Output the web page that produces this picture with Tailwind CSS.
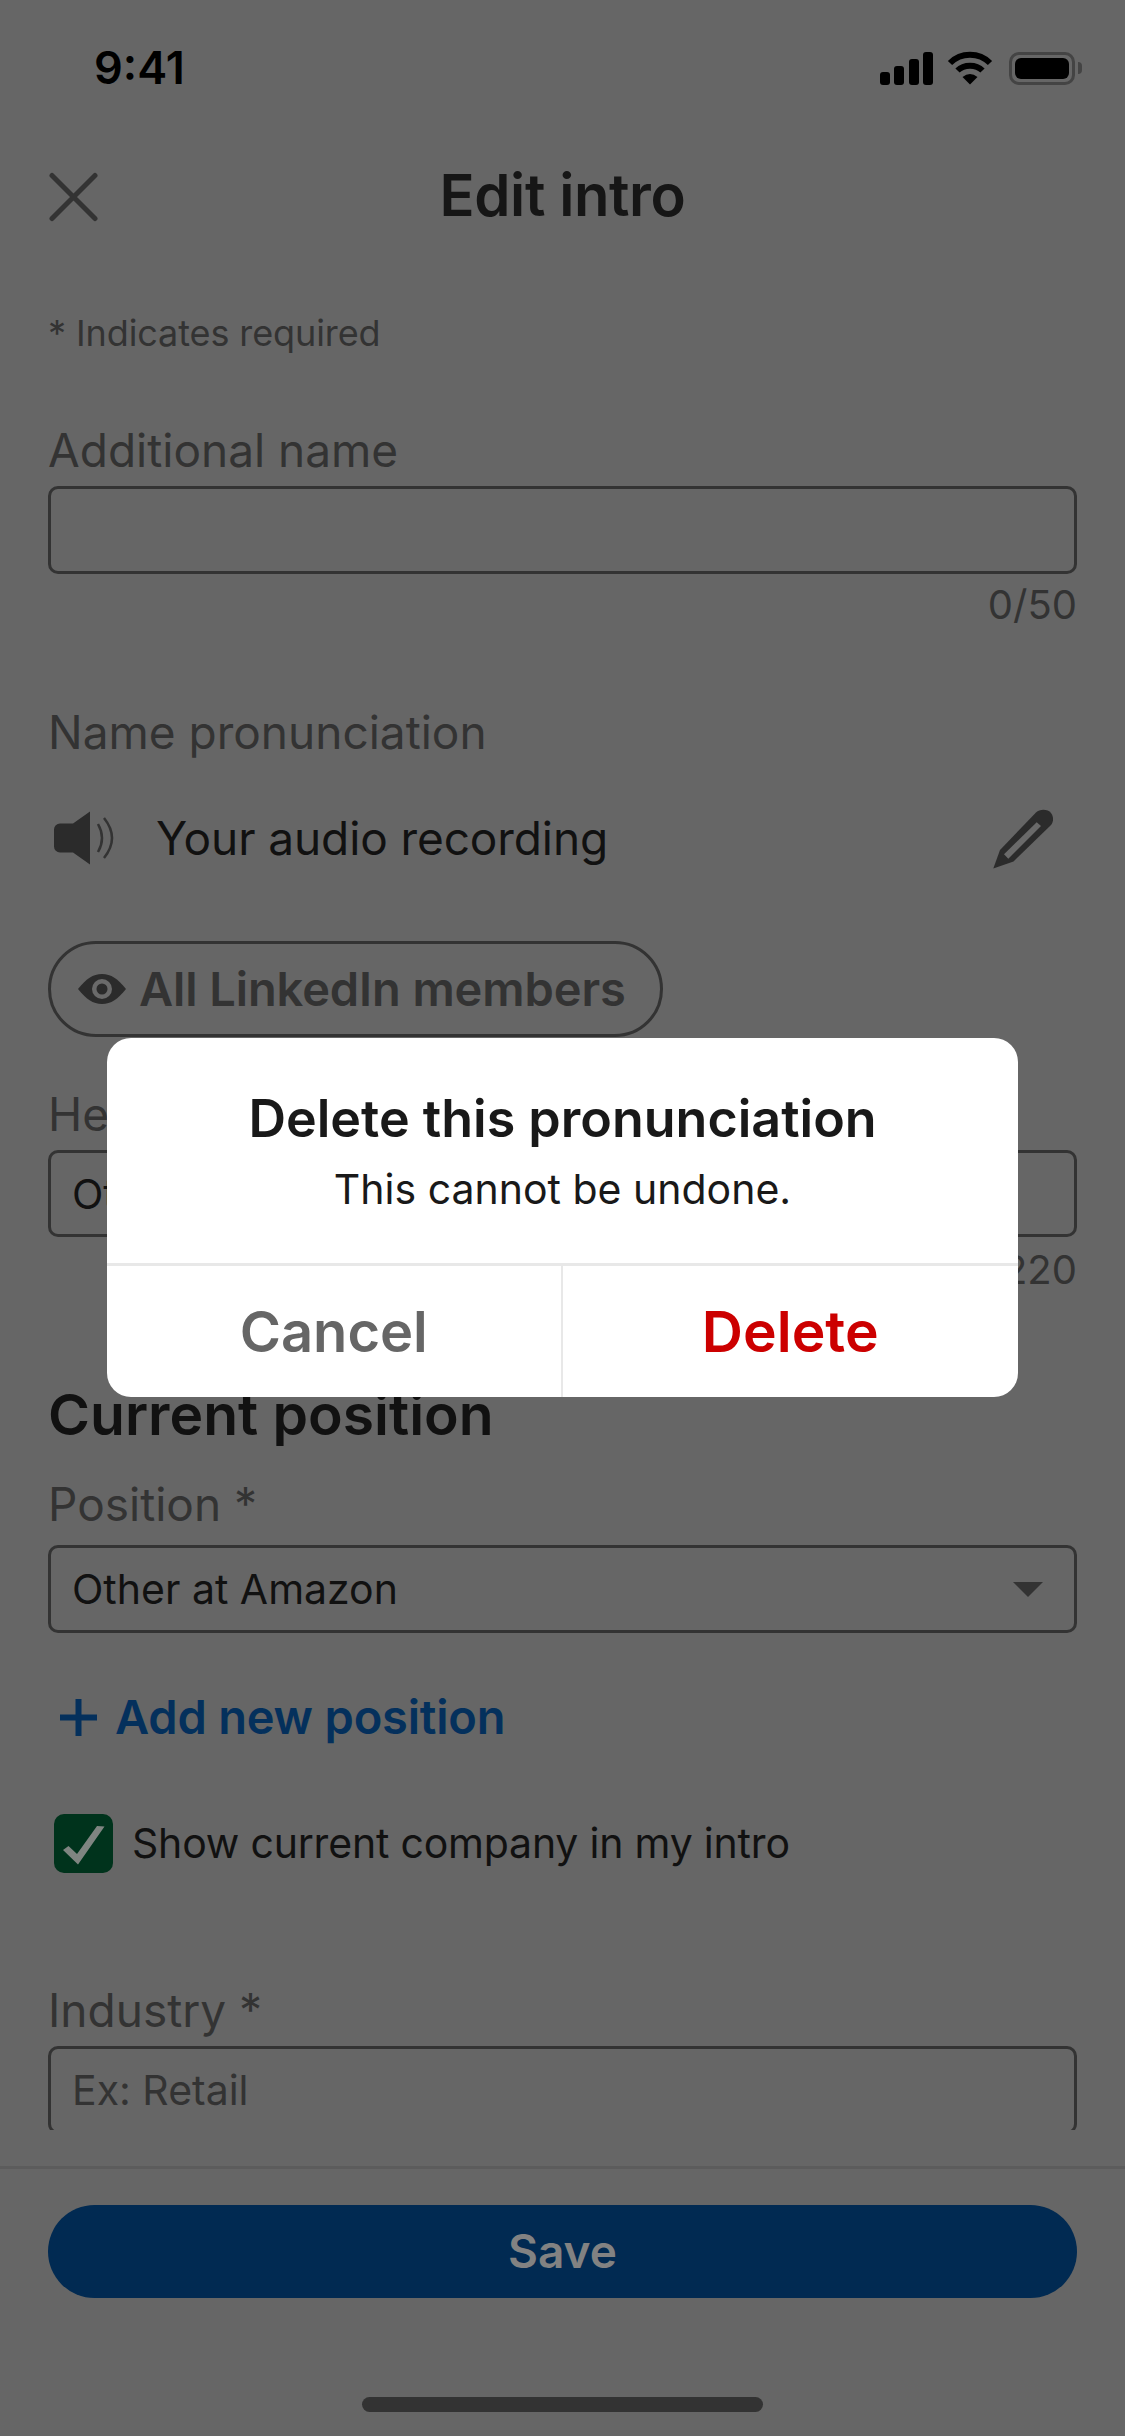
<!DOCTYPE html>
<html lang="en">
<head>
  <meta charset="UTF-8" />
  <title>Edit intro</title>
  <script src="https://cdn.jsdelivr.net/npm/@tailwindcss/browser@4"></script>
</head>
<body class="font-['Inter',sans-serif]">
  <div class="relative w-[1125px] h-[2436px] overflow-hidden bg-[#666666] flex flex-col">

    <!-- Status bar -->
    <div class="h-[136px] shrink-0 flex items-center justify-between pl-[94px] pr-[43px]">
      <span class="text-[45px] font-semibold text-black">9:41</span>
      <div class="flex items-center gap-[13px]">
        <svg width="54" height="33" viewBox="0 0 54 33" fill="#000">
          <rect x="0" y="20" width="10" height="13" rx="3" />
          <rect x="14" y="14" width="10" height="19" rx="3" />
          <rect x="29" y="7" width="10" height="26" rx="3" />
          <rect x="43" y="0" width="10" height="33" rx="3" />
        </svg>
        <svg width="46" height="34" viewBox="0 0 46 34" fill="none" stroke="#000" stroke-width="6">
          <path d="M3 12 C14 1 32 1 43 12" />
          <path d="M10.5 19.5 C17 13 29 13 35.5 19.5" />
          <path d="M15.5 26 Q23 20 30.5 26 L23 33.5Z" fill="#000" stroke="none" />
        </svg>
        <div class="flex items-center gap-[3px] ml-[3px]">
          <div class="w-[66px] h-[33px] rounded-[10px] border-[3px] border-[#444444] p-[3px]">
            <div class="w-full h-full rounded-[6px] bg-black"></div>
          </div>
          <div class="w-[4px] h-[12px] rounded-r-[4px] bg-[#444444]"></div>
        </div>
      </div>
    </div>

    <!-- Nav -->
    <div class="relative h-[118px] shrink-0 flex items-center justify-center">
      <svg class="absolute left-[48px] top-[36px]" width="50" height="50" viewBox="0 0 50 50" stroke="#333333" stroke-width="5" stroke-linecap="round" fill="none">
        <path d="M4 3.5 L47 46.5 M47 3.5 L4 46.5" />
      </svg>
      <h1 class="text-[58px] font-semibold text-[#161616] tracking-[-0.4px]">Edit intro</h1>
    </div>

    <!-- Form -->
    <div class="h-[1876px] shrink-0 overflow-hidden px-[48px] text-[#333333]">
      <p class="mt-[54px] text-[36px] leading-[50px] tracking-[-0.1px]">* Indicates required</p>

      <p class="mt-[64px] text-[46px] leading-[56px]">Additional name</p>
      <div class="mt-[8px] h-[88px] rounded-[10px] border-[3px] border-[#333333]"></div>
      <p class="mt-[6px] text-right text-[40px] leading-[50px]">0/50</p>

      <p class="mt-[74px] text-[46px] leading-[56px]">Name pronunciation</p>
      <div class="mt-[38px] h-[80px] flex items-center justify-between pl-[6px] pr-[24px]">
        <div class="flex items-center gap-[40px]">
          <svg width="62" height="58" viewBox="0 0 62 58" fill="none" stroke="#333333" stroke-width="2.5">
            <path d="M6 14.5 H19 L36 2.5 V55.5 L19 43.5 H6 A6 6 0 0 1 0 37.5 V20.5 A6 6 0 0 1 6 14.5Z" fill="#2b2b2b" stroke="none" />
            <path d="M44 15 Q52 29 44 43" />
            <path d="M50 9 Q66 29 50 49" />
          </svg>
          <span class="text-[46px] text-[#111111] tracking-[-0.1px]">Your audio recording</span>
        </div>
        <svg width="60" height="61" viewBox="13 8 60 61">
          <path d="M13.3 68.5 L20 50 L56 12.5 C60 8.5 68 9 71 13 C74 17 73.5 22 71 25 L33.5 61.5Z" fill="#2b2b2b" />
          <path d="M24 54.3 L56.7 22.3 L61 26 L28.3 58.7Z" fill="#6a6a6a" />
        </svg>
      </div>

      <div class="mt-[63px] w-[615px] h-[96px] rounded-full border-[3px] border-[#333333] flex items-center pl-[27px] gap-[13px]">
        <svg width="48" height="30" viewBox="0 0 48 30">
          <path d="M0 15 C8 5 15 0 24 0 C33 0 40 5 48 15 C40 25 33 30 24 30 C15 30 8 25 0 15Z" fill="#2b2b2b" />
          <circle cx="24" cy="15" r="10" fill="#6a6a6a" />
          <circle cx="24" cy="15" r="5.5" fill="#2b2b2b" />
        </svg>
        <span class="text-[47px] font-semibold tracking-[-0.1px]">All LinkedIn members</span>
      </div>

      <p class="mt-[49px] text-[46px] leading-[56px]">Headline *</p>
      <div class="mt-[8px] h-[87px] rounded-[10px] border-[3px] border-[#333333] flex items-center pl-[21px] pt-[2px] text-[41px] text-[#111111]">Other at Amazon</div>
      <p class="mt-[8px] text-right text-[40px] leading-[50px]">15/220</p>

      <h2 class="mt-[87px] text-[57px] leading-[66px] font-semibold text-[#111111]">Current position</h2>

      <p class="mt-[28px] text-[46px] leading-[56px]">Position *</p>
      <div class="mt-[13px] h-[88px] rounded-[10px] border-[3px] border-[#333333] flex items-center justify-between pl-[21px] pr-[31px] text-[41px] text-[#111111]">
        <span class="pt-[2px]">Other at Amazon</span>
        <svg width="30" height="15" viewBox="0 0 30 15" fill="#333333"><path d="M0 0 H30 L15 15Z" /></svg>
      </div>

      <div class="mt-[54px] h-[60px] flex items-center pl-[12px] gap-[18px] text-[#04305c]">
        <svg width="37" height="37" viewBox="0 0 37 37" stroke="#04305c" stroke-width="6"><path d="M18.5 0 V37 M0 18.5 H37" /></svg>
        <span class="text-[47px] font-semibold tracking-[-0.2px]">Add new position</span>
      </div>

      <div class="mt-[67px] h-[59px] flex items-center pl-[6px] gap-[19px]">
        <div class="w-[59px] h-[59px] rounded-[10px] bg-[#00331c]">
          <svg width="59" height="59" viewBox="0 0 59 59"><path d="M9 36 L14.5 32 L23 40 L43 12 L50.5 12.5 L24 50.5Z" fill="#7f8581" /></svg>
        </div>
        <span class="text-[41px] text-[#111111] tracking-[-0.2px]">Show current company in my intro</span>
      </div>

      <p class="mt-[109px] text-[46px] leading-[56px]">Industry *</p>
      <div class="mt-[8px] h-[88px] rounded-[10px] border-[3px] border-[#333333] flex items-center pl-[21px] pt-[2px] text-[41px]">Ex: Retail</div>
    </div>

    <!-- Footer -->
    <div class="mt-[36px] border-t-[3px] border-[#5c5c5c] px-[48px] pt-[36px]">
      <div class="h-[93px] rounded-full bg-[#012a52] flex items-center justify-center text-[46px] font-semibold text-[#828282]">Save</div>
    </div>
    <div class="mt-[99px] mx-auto w-[401px] h-[15px] rounded-full bg-[#333333]"></div>

    <!-- Dialog -->
    <div class="absolute left-[107px] top-[1038px] w-[911px] h-[359px] rounded-[24px] bg-white overflow-hidden flex flex-col">
      <div class="h-[225px] flex flex-col items-center pt-[49px]">
        <p class="text-[52px] leading-[64px] font-semibold text-[#191919]">Delete this pronunciation</p>
        <p class="mt-[10px] text-[41px] leading-[56px] text-[#191919]">This cannot be undone.</p>
      </div>
      <div class="flex-1 grid grid-cols-2 border-t-[3px] border-[#e8e8e8]">
        <div class="flex items-center justify-center border-r-2 border-[#e8e8e8] text-[56px] font-semibold text-[#666666]">Cancel</div>
        <div class="flex items-center justify-center text-[57px] font-semibold text-[#cc0000]">Delete</div>
      </div>
    </div>
  </div>
</body>
</html>
